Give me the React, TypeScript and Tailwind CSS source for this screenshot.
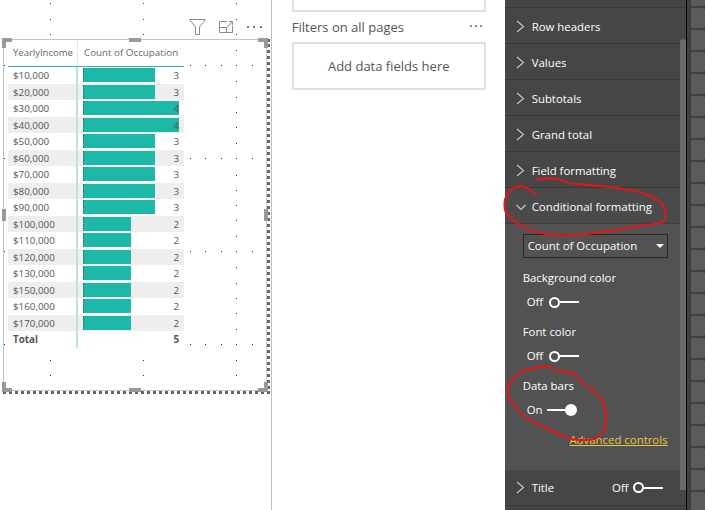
const incomes = [
  ["$10,000", 3],
  ["$20,000", 3],
  ["$30,000", 4],
  ["$40,000", 4],
  ["$50,000", 3],
  ["$60,000", 3],
  ["$70,000", 3],
  ["$80,000", 3],
  ["$90,000", 3],
  ["$100,000", 2],
  ["$110,000", 2],
  ["$120,000", 2],
  ["$130,000", 2],
  ["$150,000", 2],
  ["$160,000", 2],
  ["$170,000", 2],
] as const;

const collapsedTop = ["Row headers", "Values", "Subtotals", "Grand total", "Field formatting"];

const gridDots: [number, number][] = [
  ...[3, 19, 34, 360, 375].flatMap((y) => [50, 143, 236].map((x): [number, number] => [x, y])),
  [236, 3], [236, 50], [236, 81], [236, 97], [236, 112], [236, 127], [236, 143], [236, 175], [236, 190],
  [236, 205], [236, 220], [236, 236], [236, 267], [236, 283], [236, 298], [236, 313], [236, 329],
  ...[65, 158, 251, 344].flatMap((y) => [4, 190, 205, 221, 236, 252].map((x): [number, number] => [x, y])),
];

const Chevron = ({ open = false }: { open?: boolean }) => (
  <svg width="14" height="14" viewBox="0 0 14 14" className="shrink-0" fill="none" stroke="#c8c8c8" strokeWidth="1.1">
    {open ? <path d="M3.5 5 L8 9.5 L12.5 5" /> : <path d="M4 1 L10.5 6.5 L4 12" />}
  </svg>
);

const Toggle = ({ on = false }: { on?: boolean }) =>
  on ? (
    <div className="flex items-center">
      <div className="w-[19px] h-[2px] bg-white" />
      <div className="w-[12px] h-[12px] rounded-full bg-white -ml-[1px]" />
    </div>
  ) : (
    <div className="flex items-center">
      <div className="w-[11px] h-[11px] rounded-full border-2 border-white" />
      <div className="w-[19px] h-[2px] bg-white" />
    </div>
  );

const PanelRow = ({ label }: { label: string }) => (
  <div className="h-[36px] flex items-center pl-[8px] pt-[2px] bg-[#464646] border-b border-[#383838] text-white">
    <Chevron />
    <span className="ml-[5px]">{label}</span>
  </div>
);

const Handle = ({ className }: { className: string }) => <div className={`absolute bg-[#999999] ${className}`} />;

export default function App() {
  return (
    <div className="flex w-[705px] h-[510px] overflow-hidden bg-white text-[11.4px] font-['Open_Sans',sans-serif]">
      {/* report canvas */}
      <div className="relative w-[272px] h-full border-r border-[#bdbdbd] pl-[3px]">
        <svg className="absolute left-0 top-0" width="271" height="510">
          {gridDots.map(([x, y], i) => (
            <rect key={i} x={x} y={y} width="1" height="1" fill="#333333" />
          ))}
        </svg>

        <div className="relative h-[39px] flex items-end justify-end pr-[9px] pb-[4px] gap-[13px]">
          <svg width="17" height="16" viewBox="0 0 17 16" fill="none" stroke="#8a8a8a">
            <path d="M0.5 0.5 H16.5 L10.5 8 V15.5 H6.5 V8 Z" />
          </svg>
          <svg width="14" height="12" viewBox="0 0 14 12" className="mb-[2px]" fill="none" stroke="#8a8a8a">
            <path d="M8 0.5 H0.5 V11.5 H13.5 V5" />
            <path d="M0.5 6.5 H7.5 V11.5" />
            <path d="M8 6.5 L13 1 M10 0.5 H13.5 V4" />
          </svg>
          <div className="flex gap-[4.5px] mb-[7px] ml-[1px]">
            <div className="w-[2px] h-[2px] bg-[#777777]" />
            <div className="w-[2px] h-[2px] bg-[#777777]" />
            <div className="w-[2px] h-[2px] bg-[#777777]" />
          </div>
        </div>

        {/* selected table visual */}
        <div className="relative w-[267px] h-[355px] border-r-[3px] border-b-[3px] border-dotted border-[#666666]">
          <div className="w-[264px] h-[352px] border border-[#c4c4c4] pl-[4px] text-[#555555] text-[9.8px]">
            <div className="w-[176px] h-[27px] flex items-center border-b-[1.5px] border-[#27c0b0] text-[#666666]">
              <div className="w-[70px] h-full pl-[5px] flex items-center border-r border-[#e8e8e8] text-[9.5px]">YearlyIncome</div>
              <div className="pl-[6px]">Count of Occupation</div>
            </div>
            {incomes.map(([label, count], i) => (
              <div key={label} className={`w-[176px] h-[16.5px] flex ${i % 2 === 1 ? "bg-[#eeeeee]" : "bg-white"}`}>
                <div className="w-[70px] pl-[5px] pt-[3px] flex items-center border-r-2 border-[#b5e6e0]">{label}</div>
                <div className="relative w-[101px] ml-[5px] pt-[3px] flex items-center justify-end pr-[5px]">
                  <div
                    className="absolute left-0 top-[1px] bottom-[1.5px] bg-[#1db8a8] border-l border-dotted border-[#555555]"
                    style={{ width: count * 24 }}
                  />
                  <span className="relative">{count}</span>
                </div>
              </div>
            ))}
            <div className="w-[176px] h-[16.5px] flex font-bold">
              <div className="w-[70px] pl-[5px] pt-[3px] flex items-center border-r-2 border-[#b5e6e0]">Total</div>
              <div className="w-[106px] pt-[3px] flex items-center justify-end pr-[5px]">5</div>
            </div>
          </div>
          <Handle className="left-[-1px] top-[-1px] w-[10px] h-[4px]" />
          <Handle className="left-[-1px] top-[-1px] w-[4px] h-[10px]" />
          <Handle className="left-[126px] top-[-1px] w-[12px] h-[4px]" />
          <Handle className="left-[255px] top-[-1px] w-[10px] h-[4px]" />
          <Handle className="left-[261px] top-[-1px] w-[4px] h-[10px]" />
          <Handle className="left-[-1px] top-[170px] w-[4px] h-[12px]" />
          <Handle className="left-[261px] top-[170px] w-[4px] h-[12px]" />
          <Handle className="left-[-1px] top-[343px] w-[4px] h-[10px]" />
          <Handle className="left-[-1px] top-[349px] w-[10px] h-[4px]" />
          <Handle className="left-[126px] top-[349px] w-[12px] h-[4px]" />
          <Handle className="left-[255px] top-[349px] w-[10px] h-[4px]" />
          <Handle className="left-[261px] top-[343px] w-[4px] h-[10px]" />
        </div>
      </div>

      {/* filters pane */}
      <div className="w-[233px] h-full pl-[20px] pr-[19px] text-[#555555]">
        <div className="h-[12px] border-x-2 border-b-2 border-[#e0e0e0] rounded-b-[2px]" />
        <div className="h-[30px] flex items-center justify-between text-[13px] pt-[1px]">
          <span>Filters on all pages</span>
          <div className="flex gap-[3px] mr-[4px] mb-[4px]">
            <div className="w-[2px] h-[2px] bg-[#888888]" />
            <div className="w-[2px] h-[2px] bg-[#888888]" />
            <div className="w-[2px] h-[2px] bg-[#888888]" />
          </div>
        </div>
        <div className="h-[48px] pt-[1px] border-2 border-[#e0e0e0] rounded-[2px] flex items-center justify-center text-[13px]">
          Add data fields here
        </div>
      </div>

      {/* format pane */}
      <div className="relative w-[182px] h-full bg-[#464646] border-r-[1.5px] border-black">
        <div className="h-[8px] border-b border-[#383838]" />
        {collapsedTop.map((label) => (
          <PanelRow key={label} label={label} />
        ))}
        <div className="h-[36px] flex items-center pl-[8px] pt-[2px] bg-[#4a4a4a] border-b border-[#404040] text-white">
          <Chevron open />
          <span className="ml-[5px]">Conditional formatting</span>
        </div>
        <div className="h-[246px] bg-[#525252] pl-[18px] pr-[18px] pt-[10px] text-white">
          <div className="h-[24px] pb-[1px] border border-[#262626] flex items-center justify-between pl-[4px] pr-[3px]">
            <span>Count of Occupation</span>
            <div className="w-0 h-0 border-x-[4px] border-x-transparent border-t-[4px] border-t-white" />
          </div>
          <div className="mt-[11px] h-[18px] flex items-center">Background color</div>
          <div className="mt-[6px] h-[18px] flex items-center pl-[4px] gap-[6px]">
            <span>Off</span>
            <Toggle />
          </div>
          <div className="mt-[12px] h-[18px] flex items-center">Font color</div>
          <div className="mt-[6px] h-[18px] flex items-center pl-[4px] gap-[6px]">
            <span>Off</span>
            <Toggle />
          </div>
          <div className="mt-[12px] h-[18px] flex items-center">Data bars</div>
          <div className="mt-[6px] h-[18px] flex items-center pl-[4px] gap-[4px]">
            <span>On</span>
            <Toggle on />
          </div>
          <div className="mt-[12px] h-[18px] flex items-center justify-end text-[#ebc742] underline">Advanced controls</div>
        </div>
        <div className="h-[36px] flex items-center pl-[8px] pr-[23px] border-b border-[#383838] text-white">
          <Chevron />
          <span className="ml-[5px]">Title</span>
          <span className="ml-auto mr-[4px]">Off</span>
          <Toggle />
        </div>
        {/* scrollbar */}
        <div className="absolute right-0 top-[39px] w-[6px] h-[451px] rounded-t-[3px] bg-[#6b6b6b]" />
      </div>

      {/* visualizations strip */}
      <div className="w-[18.5px] h-full bg-[#404040] pl-[4px] overflow-hidden">
        <div className="h-[6px] mb-[2px] bg-[#5b5b5b] rounded-b-[2px]" />
        {Array.from({ length: 23 }, (_, i) => (
          <div key={i} className="h-[20px] mb-[2px] bg-[#5b5b5b] rounded-[2px]" />
        ))}
      </div>

      {/* hand drawn annotations */}
      <svg className="absolute left-0 top-0 pointer-events-none" width="705" height="510" fill="none" stroke="#e8141c" strokeWidth="2">
        <path d="M535.7 180 C542 178 550 178 557 179 C565 181 570 184 577 184 C590 185 600 186 610 187 C622 189 634 190 643 193 C651 196 656 198 660 202 C664 206 666 209 666 213 C666 218 665 220 663 222 C654 225 644 225 633 227 C622 229 612 231 600 232 C587 234 573 236 560 235 C551 235 544 234 537 232 C529 229 522 227 517 223 C511 219 506 215 505 210 C504 204 504 199 507 195 C510 190 513 187 517 187 C520 186 524 186 527 188 C530 190 533 192 536 194" />
        <path d="M555 370 C553 368 552 367 550 367 C544 366 538 367 533 368 C527 369 521 372 517 375 C512 379 509 383 508 388 C507 394 510 399 513 403 C517 409 521 414 527 418 C533 422 540 425 547 428 C555 432 563 437 572 439 C580 440 590 441 597 438 C602 435 604 431 605 427 C606 420 606 413 605 407 C604 402 600 397 597 393 C593 389 587 387 583 383 C579 380 577 375 573 373 C568 371 562 371 557 371" />
      </svg>
    </div>
  );
}
